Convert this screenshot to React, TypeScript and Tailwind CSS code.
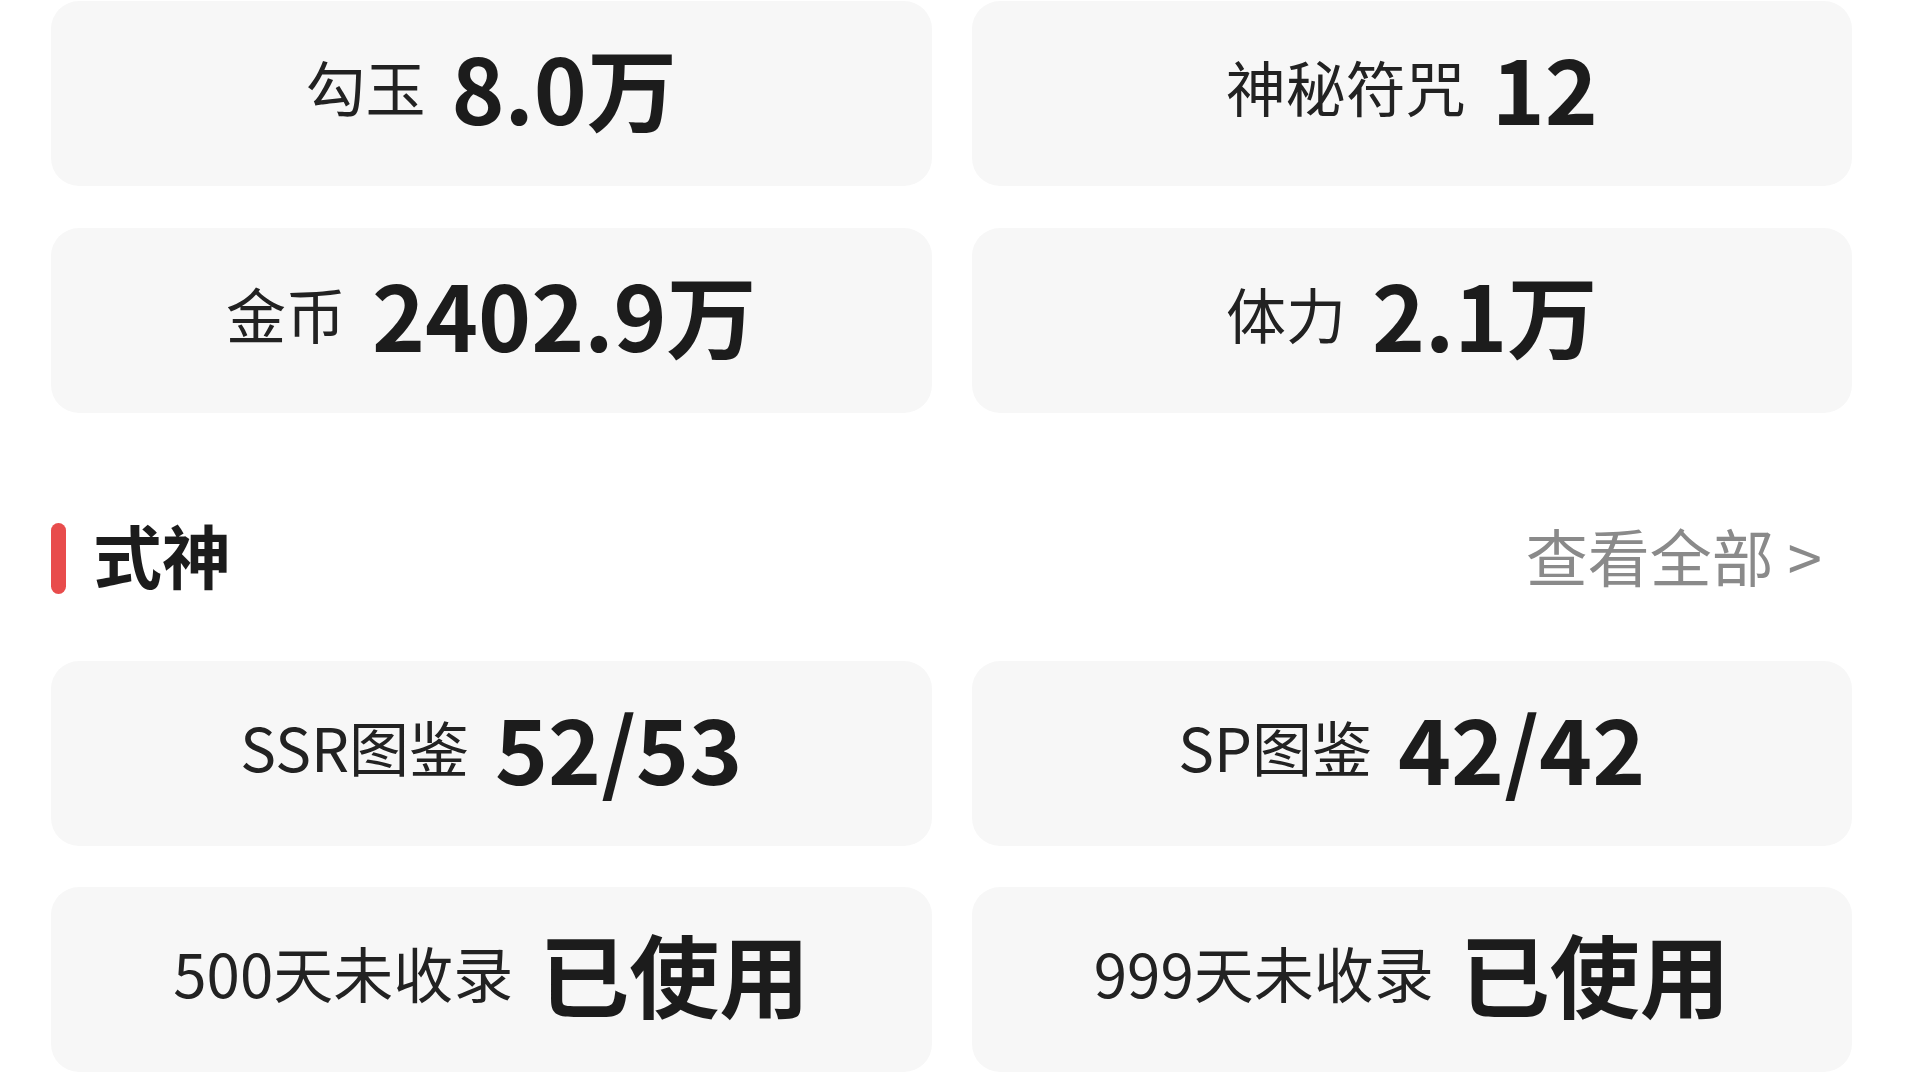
const topStats = [
  { label: '勾玉', value: '8.0万' },
  { label: '神秘符咒', value: '12' },
  { label: '金币', value: '2402.9万' },
  { label: '体力', value: '2.1万' },
]

const shikigamiStats = [
  { label: 'SSR图鉴', value: '52/53' },
  { label: 'SP图鉴', value: '42/42' },
  { label: '500天未收录', value: '已使用' },
  { label: '999天未收录', value: '已使用' },
]

function StatCard({ label, value }: { label: string; value: string }) {
  return (
    <div className="h-[185px] pb-[16px] rounded-[28px] bg-[#f7f7f7] flex items-center justify-center">
      <span className="text-[60px] leading-none text-[#222222]">{label}</span>
      <span className="ml-[26px] text-[90px] leading-none font-bold text-[#1c1c1c]">{value}</span>
    </div>
  )
}

export default function App() {
  return (
    <div className="w-[1920px] h-[1080px] overflow-hidden bg-white pl-[51px] pr-[68px] pt-px font-['Noto_Sans_CJK_SC','Noto_Sans',sans-serif]">
      <div className="grid grid-cols-2 gap-x-10 gap-y-[42px]">
        {topStats.map((s) => (
          <StatCard key={s.label} label={s.label} value={s.value} />
        ))}
      </div>

      {/* 式神 section header */}
      <div className="mt-[110px] mb-[67px] h-[71px] flex items-center justify-between">
        <div className="flex items-center">
          <div className="w-[15px] h-[71px] rounded-full bg-[#e84c4c]" />
          <span className="ml-[27px] -mt-[8px] text-[69px] leading-none font-bold text-[#1c1c1c]">式神</span>
        </div>
        <span className="mr-[30px] -mt-[8px] text-[62px] leading-none text-[#8a8a8a]">查看全部 &gt;</span>
      </div>

      <div className="grid grid-cols-2 gap-x-10 gap-y-[41px]">
        {shikigamiStats.map((s) => (
          <StatCard key={s.label} label={s.label} value={s.value} />
        ))}
      </div>
    </div>
  )
}
